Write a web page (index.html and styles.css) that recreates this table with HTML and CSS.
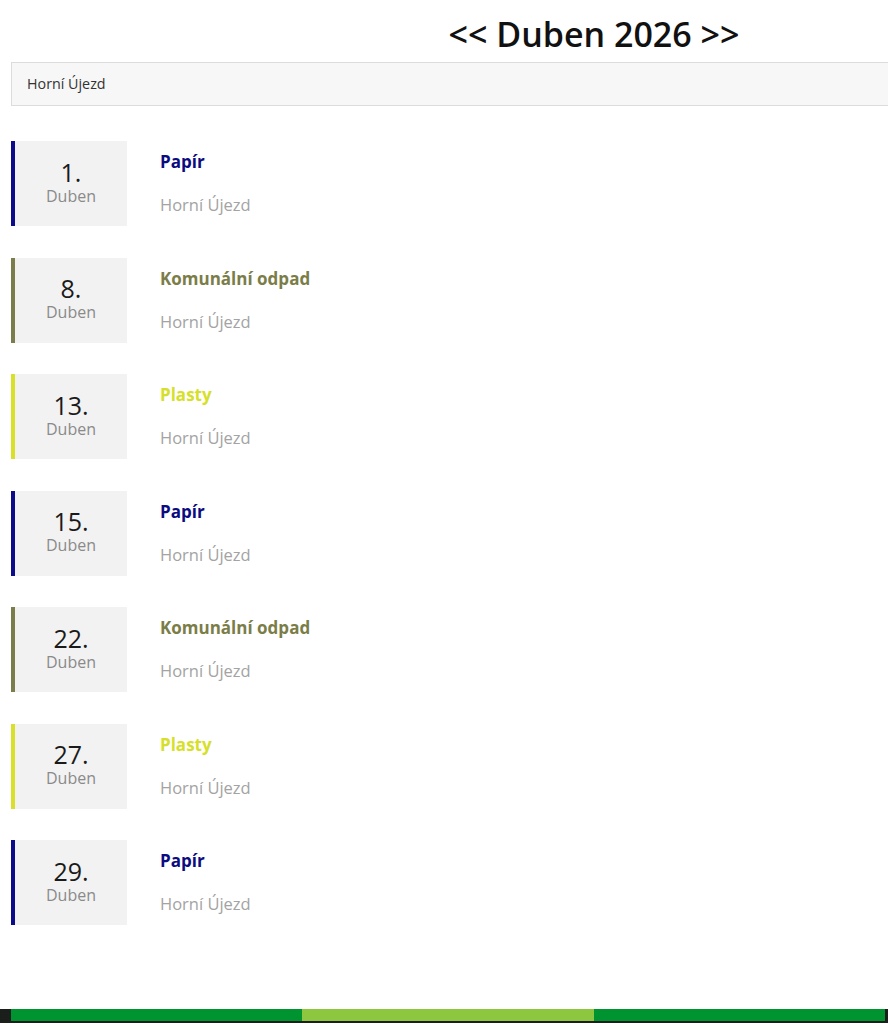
FILE: index.html
```html
<!DOCTYPE html>
<html lang="cs">
<head>
<meta charset="utf-8">
<title>Svoz odpadu – Duben 2026</title>
<link rel="stylesheet" href="styles.css">
</head>
<body>
<div class="page">
  <main class="container">
    <h1 class="month-title"><span class="nav">&lt;&lt;</span> Duben 2026 <span class="nav">&gt;&gt;</span></h1>
    <div class="select-box">Horní Újezd</div>
    <ul class="events">
      <li class="event papir">
        <div class="date"><span class="day">1.</span><span class="month">Duben</span></div>
        <div class="info"><span class="type">Papír</span><span class="place">Horní Újezd</span></div>
      </li>
      <li class="event komunal">
        <div class="date"><span class="day">8.</span><span class="month">Duben</span></div>
        <div class="info"><span class="type">Komunální odpad</span><span class="place">Horní Újezd</span></div>
      </li>
      <li class="event plasty">
        <div class="date"><span class="day">13.</span><span class="month">Duben</span></div>
        <div class="info"><span class="type">Plasty</span><span class="place">Horní Újezd</span></div>
      </li>
      <li class="event papir">
        <div class="date"><span class="day">15.</span><span class="month">Duben</span></div>
        <div class="info"><span class="type">Papír</span><span class="place">Horní Újezd</span></div>
      </li>
      <li class="event komunal">
        <div class="date"><span class="day">22.</span><span class="month">Duben</span></div>
        <div class="info"><span class="type">Komunální odpad</span><span class="place">Horní Újezd</span></div>
      </li>
      <li class="event plasty">
        <div class="date"><span class="day">27.</span><span class="month">Duben</span></div>
        <div class="info"><span class="type">Plasty</span><span class="place">Horní Újezd</span></div>
      </li>
      <li class="event papir">
        <div class="date"><span class="day">29.</span><span class="month">Duben</span></div>
        <div class="info"><span class="type">Papír</span><span class="place">Horní Újezd</span></div>
      </li>
    </ul>
  </main>
  <footer class="footer">
    <div class="stripes">
      <span class="stripe green"></span>
      <span class="stripe light"></span>
      <span class="stripe green"></span>
    </div>
  </footer>
</div>
</body>
</html>
```

FILE: styles.css
```css
html, body {
  margin: 0;
  padding: 0;
  background: #ffffff;
  overflow: hidden;
}

body {
  font-family: "Open Sans", "Liberation Sans", sans-serif;
  color: #222;
}

.page {
  width: 1200px;
}

.container {
  margin-left: 11px;
  width: 1166px;
}

.month-title {
  margin: 14px 0 0;
  height: 40px;
  line-height: 40px;
  text-align: center;
  font-size: 34px;
  font-weight: 600;
  color: #111;
}

.select-box {
  margin-top: 8px;
  height: 42px;
  line-height: 42px;
  box-sizing: content-box;
  background: #f7f7f7;
  border: 1px solid #dcdcdc;
  padding-left: 15px;
  font-size: 14.3px;
  color: #333;
}

.events {
  list-style: none;
  margin: 35px 0 0;
  padding: 0;
  display: flex;
  flex-direction: column;
  gap: 31.5px;
}

.event {
  display: flex;
  align-items: flex-start;
  gap: 33px;
}

.date {
  width: 116px;
  height: 85px;
  border-left: 4px solid #0c0c8a;
  background: #f2f2f2;
  display: flex;
  flex-direction: column;
  align-items: center;
  justify-content: center;
  box-sizing: border-box;
  padding-bottom: 3px;
}

.day {
  font-size: 25px;
  line-height: 27px;
  color: #1a1a1a;
}

.month {
  font-size: 16px;
  line-height: 20px;
  color: #8a8a8a;
}

.info {
  display: flex;
  flex-direction: column;
  padding-top: 10px;
}

.type {
  font-size: 17px;
  font-weight: 700;
  line-height: 22px;
}

.place {
  margin-top: 21px;
  font-size: 16.5px;
  line-height: 22px;
  color: #a3a3a3;
}

.papir .date { border-left-color: #0c0c8a; }
.papir .type { color: #0c0c80; }

.komunal .date { border-left-color: #7b7d4a; }
.komunal .type { color: #7b7d48; }

.plasty .date { border-left-color: #d8e02a; }
.plasty .type { color: #d6df2a; }

.footer {
  margin-top: 84px;
  height: 14px;
  background: #1b1f1b;
  width: 888px;
}

.stripes {
  display: flex;
  padding-left: 11px;
}

.stripe {
  display: block;
  width: 291.3px;
  height: 12px;
}

.stripe.green { background: #009430; }
.stripe.light { background: #8dc63f; }
```
